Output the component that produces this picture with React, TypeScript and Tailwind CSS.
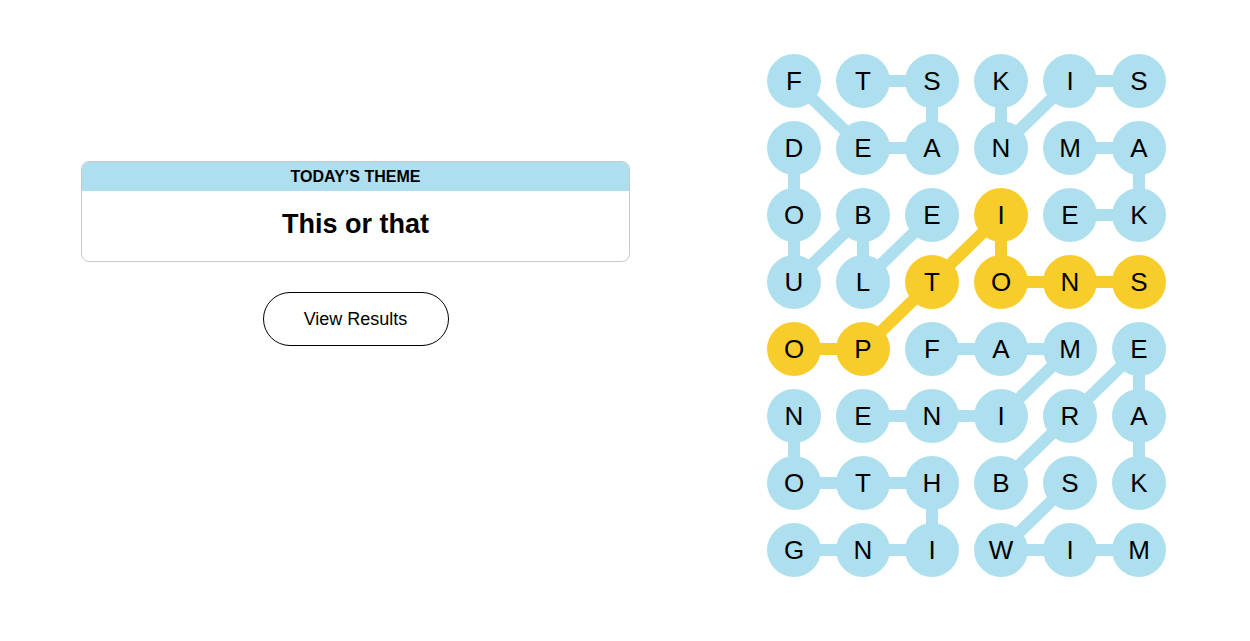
const ROWS = ['FTSKIS', 'DEANMA', 'OBEIEK', 'ULTONS', 'OPFAME', 'NENIRA', 'OTHBSK', 'GNIWIM']

type Cell = [number, number]

// found words, each as the chain of cells it runs through
const WORDS: Cell[][] = [
  [[0, 0], [1, 1], [1, 2], [0, 2], [0, 1]],
  [[1, 0], [2, 0], [3, 0], [2, 1], [3, 1], [2, 2]],
  [[0, 5], [0, 4], [1, 3], [0, 3]],
  [[1, 4], [1, 5], [2, 5], [2, 4]],
  [[4, 2], [4, 3], [4, 4], [5, 3], [5, 2], [5, 1]],
  [[6, 3], [5, 4], [4, 5], [5, 5], [6, 5]],
  [[5, 0], [6, 0], [6, 1], [6, 2], [7, 2], [7, 1], [7, 0]],
  [[6, 4], [7, 3], [7, 4], [7, 5]],
]

const SPANGRAM: Cell[] = [[4, 0], [4, 1], [3, 2], [2, 3], [3, 3], [3, 4], [3, 5]]

const BLUE = '#aedfee'
const YELLOW = '#f8cd2b'

const SIZE = 54
const STEP_X = 69
const STEP_Y = 67

const toPoints = (cells: Cell[]) =>
  cells.map(([r, c]) => `${SIZE / 2 + c * STEP_X},${SIZE / 2 + r * STEP_Y}`).join(' ')

function Board() {
  const isSpangram = (r: number, c: number) => SPANGRAM.some(([sr, sc]) => sr === r && sc === c)
  return (
    <div className="relative">
      <svg className="absolute left-0 top-0" width={399} height={523}>
        {WORDS.map((w, i) => (
          <polyline
            key={i}
            points={toPoints(w)}
            fill="none"
            stroke={BLUE}
            strokeWidth={12}
            strokeLinejoin="round"
            strokeLinecap="round"
          />
        ))}
        <polyline
          points={toPoints(SPANGRAM)}
          fill="none"
          stroke={YELLOW}
          strokeWidth={12}
          strokeLinejoin="round"
          strokeLinecap="round"
        />
      </svg>
      <div className="relative grid grid-cols-[repeat(6,54px)] gap-x-[15px] gap-y-[13px]">
        {ROWS.map((row, r) =>
          row.split('').map((ch, c) => (
            <div
              key={`${r}-${c}`}
              className={`flex h-[54px] w-[54px] items-center justify-center rounded-full text-[26px] text-black ${
                isSpangram(r, c) ? 'bg-[#f8cd2b]' : 'bg-[#aedfee]'
              }`}
            >
              {ch}
            </div>
          ))
        )}
      </div>
    </div>
  )
}

export default function App() {
  return (
    <div className="flex min-h-screen bg-white pl-[81px] pt-[54px] font-['Liberation_Sans',Arial,sans-serif]">
      <div className="flex w-[549px] flex-col items-center pt-[107px]">
        <div className="w-full overflow-hidden rounded-lg border border-[#c8c8c8]">
          <div className="flex h-[29px] items-center justify-center bg-[#aedfee] text-[16px] font-bold text-black">
            TODAY’S THEME
          </div>
          <div className="flex h-[70px] items-center justify-center pb-[4px] text-[27px] font-bold text-black">
            This or that
          </div>
        </div>
        <button className="mt-[30px] h-[54px] w-[186px] rounded-full border border-black bg-white text-[18px] text-black">
          View Results
        </button>
      </div>
      <div className="ml-[137px]">
        <Board />
      </div>
    </div>
  )
}
